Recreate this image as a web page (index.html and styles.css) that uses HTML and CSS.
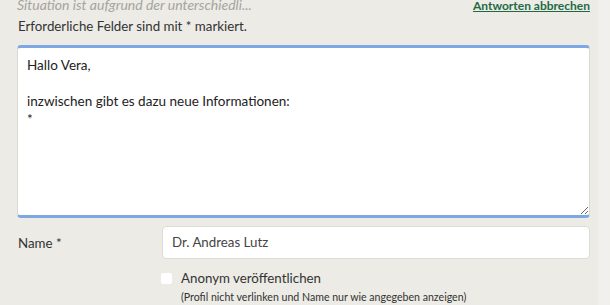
FILE: index.html
```html
<!DOCTYPE html>
<html lang="de">
<head>
<meta charset="utf-8">
<link rel="stylesheet" href="styles.css">
</head>
<body>
<div class="page">
  <main class="form">
    <div class="topline">
      <span class="excerpt">Situation ist aufgrund der unterschiedli...</span>
      <a class="cancel" href="#">Antworten abbrechen</a>
    </div>
    <p class="required">Erforderliche Felder sind mit * markiert.</p>
    <textarea class="message">Hallo Vera,

inzwischen gibt es dazu neue Informationen:
*</textarea>
    <div class="row">
      <label class="label">Name *</label>
      <div class="input">Dr. Andreas Lutz</div>
    </div>
    <div class="check-row">
      <span class="checkbox"></span>
      <div class="check-text">
        <div class="check-label">Anonym veröffentlichen</div>
        <div class="check-hint">(Profil nicht verlinken und Name nur wie angegeben anzeigen)</div>
      </div>
    </div>
  </main>
  <aside class="side"></aside>
</div>
</body>
</html>
```
FILE: styles.css
```css
html, body {
  margin: 0;
  padding: 0;
  height: 305px;
  overflow: hidden;
  font-family: Lato, "Open Sans", sans-serif;
  color: #333;
}
.page {
  display: flex;
  height: 305px;
  background: #ecebe5;
}
.form {
  width: 573px;
  padding: 0 8px 0 17px;
  flex: none;
}
.side {
  flex: 1;
  background: #f1f0ec;
}
.topline {
  display: flex;
  justify-content: space-between;
  align-items: baseline;
  margin-top: -4px;
  height: 18px;
  line-height: 18px;
}
.excerpt {
  font-size: 14px;
  font-style: italic;
  color: #a5a49f;
}
.cancel {
  font-size: 12px;
  font-weight: 700;
  color: #1f6a46;
  text-decoration: underline;
}
.required {
  margin: 3px 0 0 1px;
  font-size: 13.3px;
  line-height: 18px;
  color: #333;
}
.message {
  display: block;
  box-sizing: border-box;
  width: 573px;
  height: 173px;
  margin-top: 10px;
  padding: 8px 9px;
  font-family: Lato, "Open Sans", sans-serif;
  font-size: 13.5px;
  line-height: 18px;
  color: #222;
  background: #fff;
  border: 1px solid #d9d8d3;
  border-top: 3px solid #7ea8e4;
  border-bottom: 3px solid #7ea8e4;
  border-radius: 4px;
  outline: none;
  resize: vertical;
}
.row {
  display: flex;
  align-items: center;
  margin-top: 8px;
}
.label {
  width: 144px;
  font-size: 13.3px;
  padding-left: 1px;
  color: #333;
}
.input {
  flex: 1;
  box-sizing: border-box;
  height: 33px;
  line-height: 31px;
  padding: 0 9px;
  background: #fff;
  border: 1px solid #dedcd6;
  border-radius: 4px;
  font-size: 13.3px;
  color: #444;
}
.check-row {
  display: flex;
  margin: 11px 0 0 144px;
}
.checkbox {
  width: 11px;
  height: 11px;
  background: #fff;
  border-radius: 2px;
  margin-top: 3px;
  flex: none;
}
.check-text {
  margin-left: 9px;
}
.check-label {
  font-size: 13.3px;
  line-height: 17px;
  color: #333;
}
.check-hint {
  margin-top: 3px;
  font-size: 10.6px;
  line-height: 14px;
  color: #333;
}
```
